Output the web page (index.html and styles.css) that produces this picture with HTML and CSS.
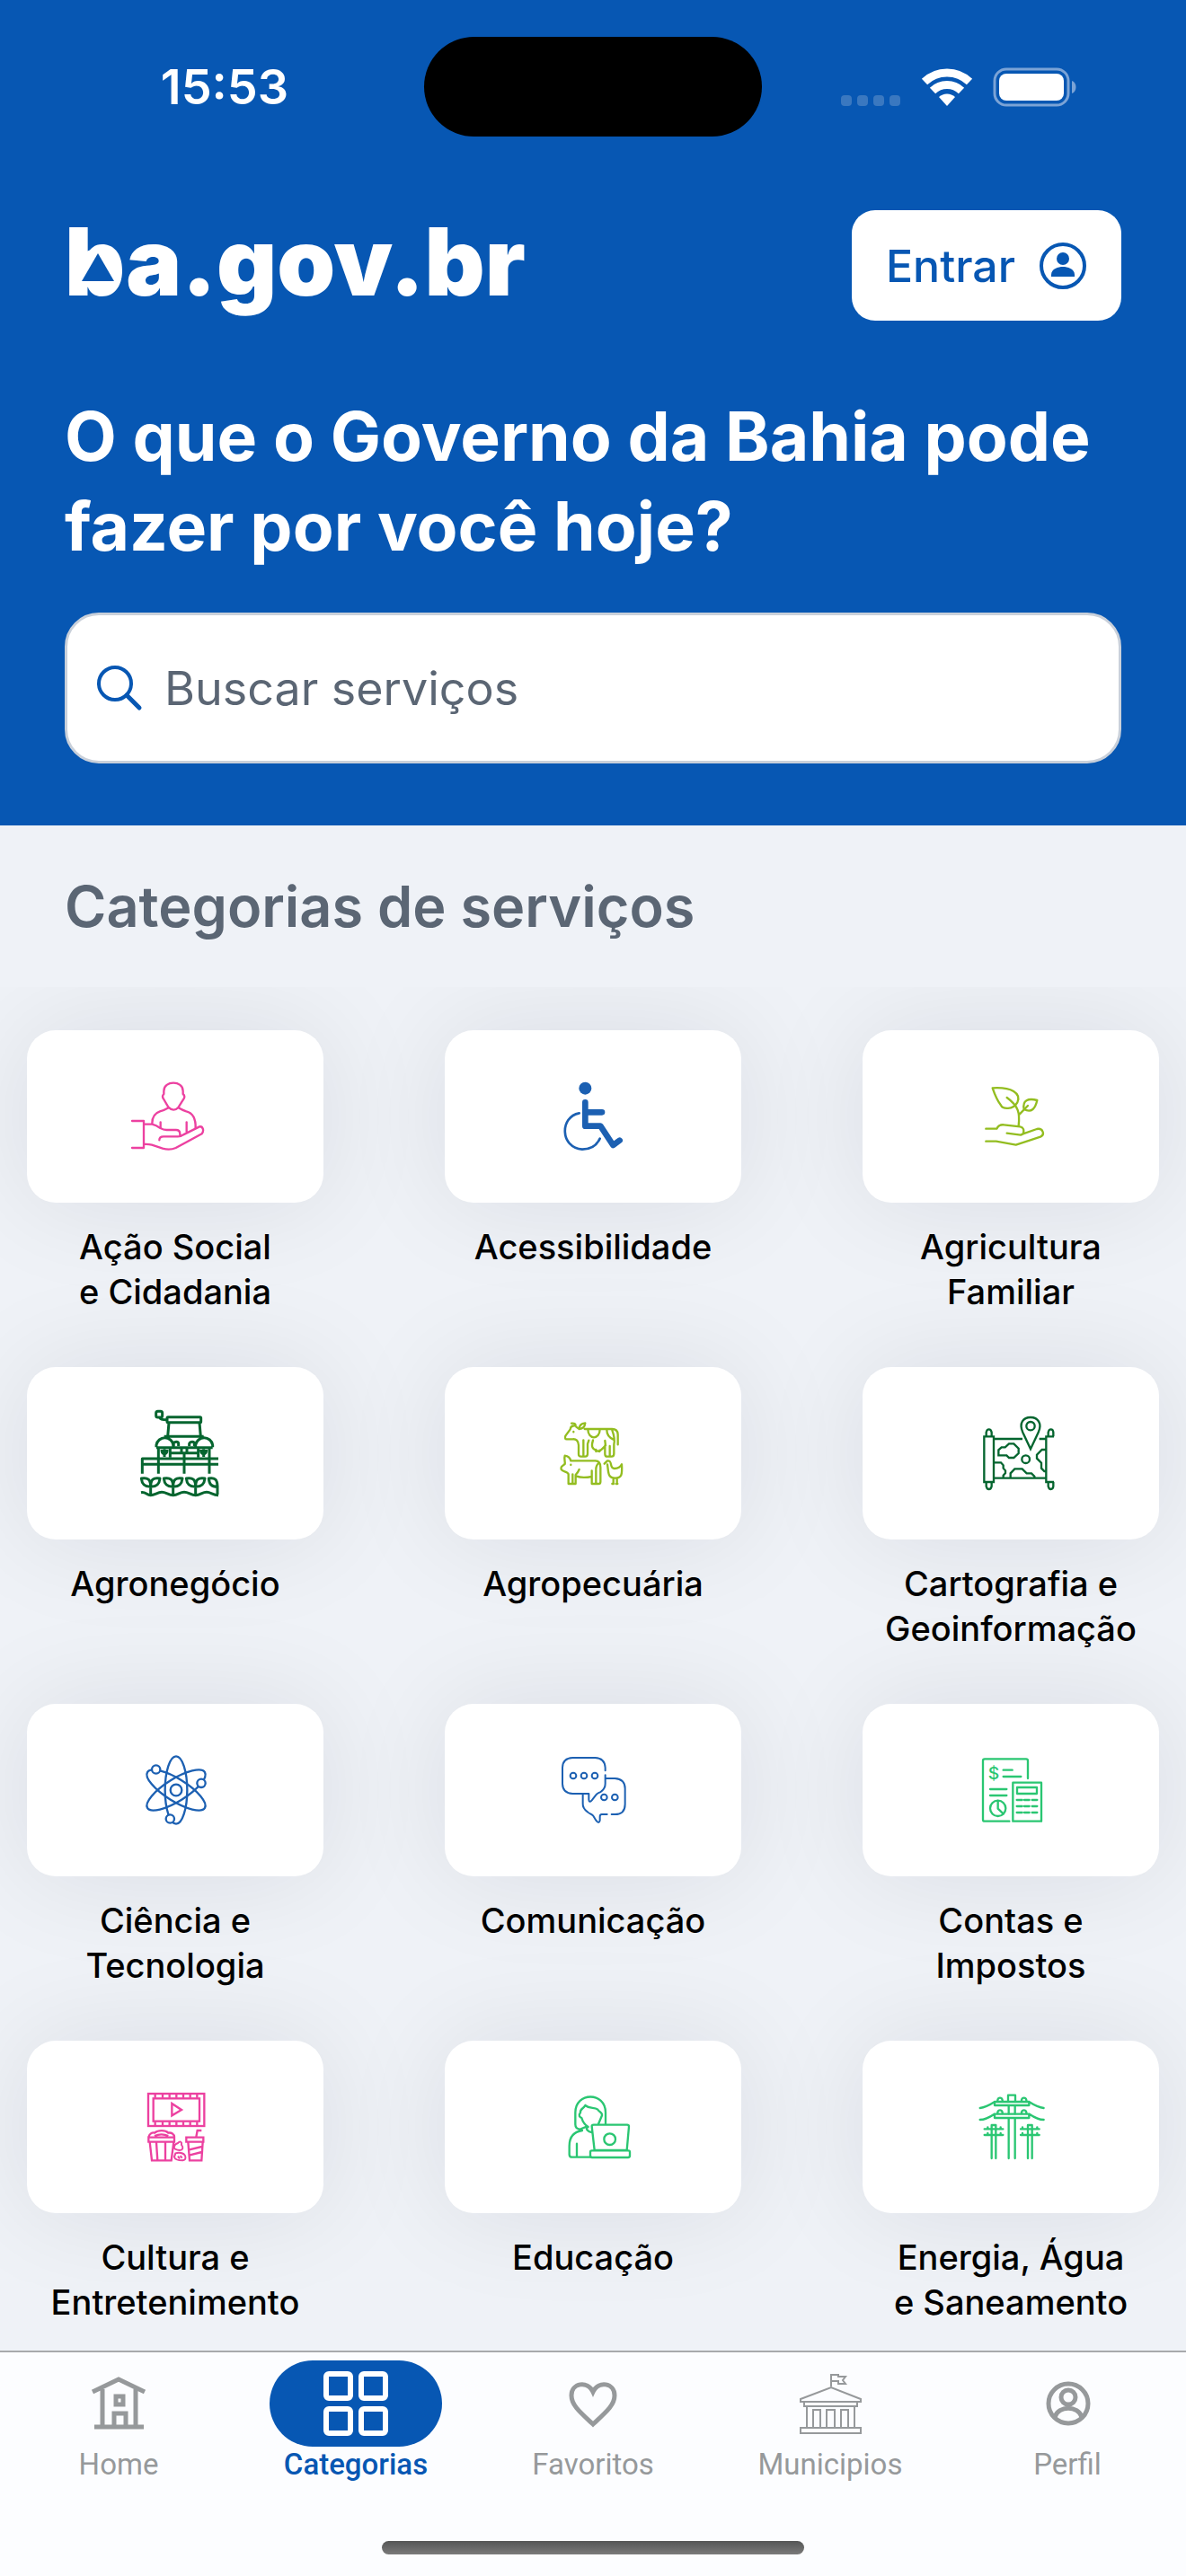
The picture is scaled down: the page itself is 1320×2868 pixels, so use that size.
FILE: index.html
```html
<!DOCTYPE html>
<html lang="pt-BR">
<head>
    <meta charset="UTF-8">
    <meta name="viewport" content="width=device-width, initial-scale=1.0">
    <title>ba.gov.br - Categorias de serviços</title>
    <link rel="stylesheet" href="styles.css">
</head>
<body>
    <header class="header">
        <div class="status-bar">
            <time class="clock">15:53</time>
            <div class="island"></div>
            <div class="status-icons">
                <svg width="67" height="44" viewBox="0 0 67 44" fill="#3a78c0">
                    <rect x="0" y="31" width="12" height="12" rx="4"/>
                    <rect x="18" y="31" width="12" height="12" rx="4"/>
                    <rect x="36" y="31" width="12" height="12" rx="4"/>
                    <rect x="54" y="31" width="12" height="12" rx="4"/>
                </svg>
                <svg width="58" height="44" viewBox="0 0 58 44" fill="none" stroke="#fff" stroke-width="9">
                    <path d="M4 16a36 36 0 0 1 50 0"/>
                    <path d="M13 26a23 23 0 0 1 32 0"/>
                    <path d="M29 43l-9-10a13 13 0 0 1 18 0z" fill="#fff" stroke="none"/>
                </svg>
                <svg width="94" height="44" viewBox="0 0 94 44">
                    <rect x="2" y="2" width="82" height="40" rx="13" fill="none" stroke="#7ba3d6" stroke-width="3"/>
                    <rect x="7" y="7" width="72" height="30" rx="8" fill="#fff"/>
                    <path d="M88 15c6 2 6 12 0 14z" fill="#7ba3d6"/>
                </svg>
            </div>
        </div>

        <div class="brand-row">
            <a href="#" class="logo">ba.gov.br
                <svg class="logo-mark" viewBox="0 0 46 42">
                    <rect x="2" y="0" width="42" height="42" rx="16" fill="#fff"/>
                    <path d="M23 4l18 31H5z" fill="#0757b3"/>
                </svg>
            </a>
            <button type="button" class="login-btn">
                Entrar
                <svg width="54" height="54" viewBox="0 0 54 54">
                    <circle cx="27" cy="27" r="24" fill="none" stroke="#0757b3" stroke-width="4"/>
                    <circle cx="27" cy="19" r="7" fill="#0757b3"/>
                    <path d="M14 39v-2c0-7 8-9 13-9s13 2 13 9v2z" fill="#0757b3"/>
                </svg>
            </button>
        </div>

        <h1>O que o Governo da Bahia pode fazer por você hoje?</h1>

        <label class="search">
            <svg width="52" height="52" viewBox="0 0 52 52" fill="none" stroke="#0757b3" stroke-width="4" stroke-linecap="round">
                <circle cx="21" cy="21" r="18"/>
                <path d="M34 34l14 14" stroke-width="5"/>
            </svg>
            <input type="search" placeholder="Buscar serviços" aria-label="Buscar serviços">
        </label>
    </header>

    <main>
        <h2>Categorias de serviços</h2>
        <div class="categories">
            <a href="#" class="category">
                <span class="card pink">
                    <svg viewBox="120 144 330 330" stroke-width="7">
                        <path d="M141 324h39v90h-39M180 335h28q14 4 26 12 12 7 22 7h32q12 0 13 12v6M232 388q0-12 14-12h48q10 0 18-6l54-27c12-2 16 14 8 24l-87 47q-20 9-44 2l-36-12q-12-3-27-2"/>
                        <path d="M208 332c0-22 8-34 26-40q16-4 29-12M296 280q12 8 26 12c24 6 32 26 31 56M236 328v18M323 328v32"/>
                        <path d="M262 278l-15-26q-8-10 0-18v-10c0-36 64-36 64 0v10q10 8 0 20l-15 24q-16 18-34 0z"/>
                    </svg>
                </span>
                <span class="name">Ação Social<br>e Cidadania</span>
            </a>
            <a href="#" class="category">
                <span class="card blue">
                    <svg viewBox="135 144 330 330" stroke-width="20">
                        <circle cx="274" cy="215" r="21" fill="#1c60b2" stroke="none"/>
                        <path d="M274 262v79h51l42 64 22-16M274 295h56"/>
                        <path d="M254 298c-66 12-64 116 10 121q42 0 59-36" stroke-width="8"/>
                    </svg>
                </span>
                <span class="name">Acessibilidade</span>
            </a>
            <a href="#" class="category">
                <span class="card lime">
                    <svg viewBox="150 144 330 330" stroke-width="7">
                        <path d="M232 350h36c6-12 12-14 24-13l54 6c12 2 14 12 10 24l-8 4-46-6M356 367l46-16c20-4 28 18 12 26l-82 27-66-12h-34"/>
                        <path d="M341 340c5-42 0-66-39-94M344 302l28-29"/>
                        <path d="M254 214c64-4 96 18 83 48-15 26-49 24-56 8-14-18-20-36-27-56zM403 255c-30-8-50 0-44 30 26 14 38-4 44-30z"/>
                    </svg>
                </span>
                <span class="name">Agricultura<br>Familiar</span>
            </a>
            <a href="#" class="category">
                <span class="card dark-green">
                    <svg viewBox="120 129 330 330" stroke-width="9" class="cropped">
                        <rect x="221" y="154" width="21" height="20" rx="6"/>
                        <path d="M234 176q2 6 22 6"/>
                        <rect x="258" y="173" width="113" height="18" rx="3"/>
                        <path d="M264 192l-4 46M366 192l4 46M248 238h132M222 274v-8a29 29 0 0 1 57 0v8M353 274v-8a29 29 0 0 1 57 0v8M222 275h188"/>
                        <path d="M279 270v-8c4-8 17-8 17 0v8M332 270v-8c4-8 17-8 17 0v8"/>
                        <path d="M229 278v84M268 278v30M362 278v30M399 278v84M306 278v14M324 278v14M268 293h94M315 294v68M249 306v-26M240 282q0 14 9 14t9-14M380 306v-26M371 282q0 14 9 14t9-14"/>
                        <path d="M429 312H175v50M177 331h252"/>
                        <path d="M203 432v-30M203 406c-20 0-29-8-31-28 22-4 31 4 31 28 0-24 9-32 31-28-2 20-11 28-31 28M278 432v-30M278 406c-20 0-29-8-31-28 22-4 31 4 31 28 0-24 9-32 31-28-2 20-11 28-31 28M353 432v-30M353 406c-20 0-29-8-31-28 22-4 31 4 31 28 0-24 9-32 31-28-2 20-11 28-31 28M426 432v-30M426 406c-20 0-27-8-29-28 20-4 29 4 29 28"/>
                        <path d="M171 425c16-3 18 9 32 9s22-10 37-10 22 10 38 10 22-10 37-10 22 10 38 10 22-10 37-10 20 10 39 10"/>
                    </svg>
                </span>
                <span class="name">Agronegócio</span>
            </a>
            <a href="#" class="category">
                <span class="card lime">
                    <svg viewBox="1515 129 330 330" stroke-width="7">
                        <path d="M1608 194q14-2 14 8-16-2-18 12l-16 22q-4 12 6 11h18q18-2 20 20v30q0 8 8 8h14q8 0 8-10v-32l4-12M1624 206l10 7q18-2 20-20-20 2-20 20M1652 213h92q18 0 19 18v34M1648 250v54M1663 214c0 36 40 36 40 0M1680 250c-6 20-4 28 10 34q10 8 20-4l12-12-2-16M1720 268v28q0 9 8 9h14q8 0 8-10v-30c4-18 0-32-6-48M1736 270v32M1726 216q0 22 22 32M1690 282v6M1702 284v4M1615 222v1"/>
                        <path d="M1586 302q16 2 20 17h82c12 0 17 10 17 22v48q0 7-7 7h-22v-24q-34 6-52-2M1586 302c-4 12 2 20 0 28-10 8-14 8-12 18 4 8 22 6 24 16v32h24v-30q8-8 12-18M1612 364v30M1690 350v44M1676 372v-20M1700 326q-10 8-10 22M1606 332v1"/>
                        <path d="M1718 329l10-10c20-2 4 26 24 26 12 0 20-6 24-14 2 34 0 46-22 46-26 0-22-20-26-46M1748 378v18M1760 378v18M1744 396h5M1757 396h5"/>
                    </svg>
                </span>
                <span class="name">Agropecuária</span>
            </a>
            <a href="#" class="category">
                <span class="card dark-green">
                    <svg viewBox="150 129 330 330" stroke-width="7" class="square">
                        <path d="M226 238h32v152h-32zM233 238v-14q2-10 9-10t9 10v14M233 390v14q2 10 9 10t9-10v-14M459 238h-26v152h26M440 238v-14q2-10 9-10t8 10v14M440 390v14q2 10 9 10t8-10v-14M258 246h96M410 246h22M258 377h175"/>
                        <path d="M381 280l-26-56c-14-32 2-50 26-50s40 20 26 50z"/>
                        <circle cx="381" cy="203" r="14"/>
                        <circle cx="365" cy="314" r="13"/>
                        <path d="M274 301v-18l10-9h12l13-12h16l16 16v16l-16 15h-16l-8-8zM258 325h24l8 9v10l7 8v8l-7 8v9M314 377v-16l14-15h25l15 15h16l10 10v6M433 282h-14l-17 17v12l15 15v18l10 10h6"/>
                    </svg>
                </span>
                <span class="name">Cartografia e<br>Geoinformação</span>
            </a>
            <a href="#" class="category">
                <span class="card blue">
                    <svg viewBox="120 114 330 330" stroke-width="7">
                        <ellipse cx="288" cy="279" rx="37" ry="113"/>
                        <ellipse cx="288" cy="279" rx="37" ry="113" transform="rotate(58 288 279)"/>
                        <ellipse cx="288" cy="279" rx="37" ry="113" transform="rotate(-58 288 279)"/>
                        <circle cx="288" cy="279" r="19"/>
                        <circle cx="221" cy="210" r="14" fill="#fff"/>
                        <circle cx="372" cy="256" r="14" fill="#fff"/>
                        <circle cx="268" cy="375" r="14" fill="#fff"/>
                    </svg>
                </span>
                <span class="name">Ciência e<br>Tecnologia</span>
            </a>
            <a href="#" class="category">
                <span class="card blue">
                    <svg viewBox="1515 114 330 330" stroke-width="6">
                        <path d="M1721 214v-10q-2-32-34-33h-75q-33 1-34 33v54q1 32 34 33h54v20q1 12 10 2l14-18c6-8 12-6 18-12q13-10 13-26v-28"/>
                        <path d="M1723 240h30q34 2 34 34v52q0 34-34 34h-11M1727 360h-18q-6 0-6 8v12q-3 14-13 0l-10-16c-6-6-12-6-18-12q-17-12-16-28v-32"/>
                        <circle cx="1614" cy="231" r="10"/>
                        <circle cx="1650" cy="231" r="10"/>
                        <circle cx="1686" cy="231" r="10"/>
                        <circle cx="1717" cy="303" r="10"/>
                        <circle cx="1753" cy="303" r="10"/>
                    </svg>
                </span>
                <span class="name">Comunicação</span>
            </a>
            <a href="#" class="category">
                <span class="card green">
                    <svg viewBox="150 114 330 330" stroke-width="7">
                        <path d="M372 240v-59q0-6-6-6H228q-6 0-6 6v196q0 6 6 6h82M290 212h30M290 234h59M246 276h55M246 297h55"/>
                        <text x="258" y="242" class="money">$</text>
                        <circle cx="272" cy="340" r="26"/>
                        <path d="M272 315v26l18 17"/>
                        <rect x="322" y="254" width="95" height="129"/>
                        <rect x="336" y="270" width="66" height="21"/>
                        <path d="M335 312h18M360 312h17M386 312h17M335 333h18M360 333h17M386 333h17M335 354h18M360 354h17M386 354h17"/>
                    </svg>
                </span>
                <span class="name">Contas e<br>Impostos</span>
            </a>
            <a href="#" class="category">
                <span class="card pink">
                    <svg viewBox="120 99 330 330" stroke-width="7" class="square">
                        <rect x="195" y="153" width="187" height="108"/>
                        <rect x="212" y="169" width="154" height="76"/>
                        <path d="M218 153v14M243 153v14M266 153v14M289 153v14M312 153v14M335 153v14M358 153v14M218 247v14M243 247v14M266 247v14M289 247v14M312 247v14M335 247v14M358 247v14"/>
                        <path d="M274 186v40l32-19z"/>
                        <path d="M196 299h86v15h-86zM200 314l7 62h65l8-62M222 316l4 60M252 316v60M196 298c4-14 14-16 20-14 12-10 36-10 46 0 10-2 20 4 20 14M216 294c14-6 32-6 46 0"/>
                        <path d="M322 299h57v15h-57zM328 314l5 62h40l4-62M355 298l4-22h14M332 340l42-10M334 358l40-10"/>
                        <path d="M294 318c8-8 14-4 12 6 8 10 4 18-6 18-10 0-22-6-18-12 0-6 6-10 12-12zM286 352c10-4 28-2 32 8 4 10 0 14-8 16-16 0-26-2-28-12zM294 362l6 8M302 360l6 8" stroke-width="6"/>
                    </svg>
                </span>
                <span class="name">Cultura e<br>Entretenimento</span>
            </a>
            <a href="#" class="category">
                <span class="card green">
                    <svg viewBox="1515 99 330 330" stroke-width="7">
                        <path d="M1722 254v-38c0-70-101-70-101 0v40q0 16 18 16M1654 192c-6 12-18 12-16 24-8 10-2 16 4 18 4 14 12 24 22 30M1654 192c16 14 30 4 42 14 4 8 16 10 14 20l-12 28M1641 270l20-8M1662 264c-8 8 2 16 14 18M1644 276c-28 4-43 22-43 52v28q0 9 10 9h62M1626 320v44"/>
                        <path d="M1676 262q0-5 6-5h112q6 0 6 6l-7 79h-108zM1671 348q0-5 5-5h122q5 0 5 5v12q0 6-6 6h-120q-6 0-6-6z"/>
                        <circle cx="1736" cy="305" r="19"/>
                    </svg>
                </span>
                <span class="name">Educação</span>
            </a>
            <a href="#" class="category">
                <span class="card green">
                    <svg viewBox="150 99 330 330" stroke-width="7">
                        <path d="M306 180v-22h24v22M308 194v26M329 194v26M308 236v133M329 236v133"/>
                        <path d="M261 180h115v12H261zM261 221h115v13H261zM212 201q20-2 48-20M425 201q-20-2-48-20M212 240q20 0 48-19M425 240q-20 0-48-19"/>
                        <path d="M271 178v-4q2-7 8-7t8 7v4M351 178v-4q2-7 8-7t8 7v4M271 219v-4q2-7 8-7t8 7v4M351 219v-4q2-7 8-7t8 7v4"/>
                        <path d="M251 369V258h14v111M227 271h62M227 291h62M238 265v5M281 265v5M238 285v5M281 285v5M372 369V258h14v111M348 271h62M348 291h62M354 265v5M403 265v5M354 285v5M403 285v5"/>
                    </svg>
                </span>
                <span class="name">Energia, Água<br>e Saneamento</span>
            </a>
        </div>
    </main>

    <nav class="tab-bar">
        <div class="tabs">
            <a href="#" class="tab">
                <span class="tab-icon">
                    <svg viewBox="0 0 72 72" stroke-width="5">
                        <path d="M7 23L36 9l29 14M18 20v42M55 20v42M9 62h55M31 62V47h13v15M33 28h8v9h-8z"/>
                    </svg>
                </span>
                Home
            </a>
            <a href="#" class="tab active">
                <span class="tab-icon">
                    <svg viewBox="0 0 72 72" stroke-width="6">
                        <rect x="3" y="3" width="27" height="27" rx="3"/>
                        <rect x="42" y="3" width="27" height="27" rx="3"/>
                        <rect x="3" y="42" width="27" height="27" rx="3"/>
                        <rect x="42" y="42" width="27" height="27" rx="3"/>
                    </svg>
                </span>
                Categorias
            </a>
            <a href="#" class="tab">
                <span class="tab-icon">
                    <svg viewBox="0 0 72 72" stroke-width="5">
                        <path d="M36 59C22 46 12 38 12 27c0-14 18-17 24-4 6-13 24-10 24 4 0 11-10 19-24 32z"/>
                    </svg>
                </span>
                Favoritos
            </a>
            <a href="#" class="tab">
                <span class="tab-icon">
                    <svg viewBox="0 0 72 72" stroke-width="2">
                        <path d="M37 17V3M37 4h8v2h8l-3 4 3 4h-8v-3h-8M3 31l34-13 33 13v3H3zM7 34h59v5H7zM10 39v24M63 39v24M17 63V43h8v20M32 63V43h9v20M48 63V43h8v20M3 63h67v6H3z"/>
                    </svg>
                </span>
                Municipios
            </a>
            <a href="#" class="tab">
                <span class="tab-icon">
                    <svg viewBox="0 0 72 72" stroke-width="5">
                        <circle cx="37" cy="36" r="22"/>
                        <circle cx="37" cy="29" r="8"/>
                        <path d="M22 51c4-13 26-13 30 0"/>
                    </svg>
                </span>
                Perfil
            </a>
        </div>
        <div class="home-indicator"></div>
    </nav>
</body>
</html>
```

FILE: styles.css
```css
* {
    box-sizing: border-box;
}
body {
    margin: 0;
    height: 100vh;
    display: flex;
    flex-direction: column;
    background-color: #eff2f7;
    font-family: Inter, sans-serif;
    color: #000;
}
a {
    color: inherit;
    text-decoration: none;
}

/* header */
.header {
    background-color: #0757b3;
    color: white;
    padding: 41px 72px 69px;
}
.status-bar {
    display: grid;
    grid-template-columns: 1fr 376px 1fr;
    align-items: center;
    margin: 0 -72px 82px;
}
.clock {
    padding-left: 28px;
    text-align: center;
    font-size: 54px;
    font-weight: 600;
}
.island {
    height: 111px;
    border-radius: 56px;
    background-color: black;
}
.status-icons {
    display: flex;
    justify-content: center;
    gap: 22px;
    padding-right: 34px;
}
.brand-row {
    display: flex;
    justify-content: space-between;
    align-items: flex-start;
    height: 123px;
    margin-bottom: 79px;
}
.logo {
    position: relative;
    font-size: 104px;
    font-weight: 900;
    line-height: 114px;
}
.logo-mark {
    position: absolute;
    left: 14px;
    top: 44px;
    width: 46px;
    height: 42px;
}
.login-btn {
    display: flex;
    align-items: center;
    gap: 26px;
    height: 123px;
    padding: 0 38px;
    border: none;
    border-radius: 26px;
    background-color: white;
    color: #0757b3;
    font-family: inherit;
    font-size: 50px;
    font-weight: 500;
}
h1 {
    margin: 0 0 46px;
    font-size: 75px;
    font-weight: 700;
    line-height: 100px;
}
.search {
    display: flex;
    align-items: center;
    gap: 24px;
    height: 168px;
    padding: 0 32px;
    border: 3px solid #c9d0da;
    border-radius: 38px;
    background-color: white;
}
.search input {
    flex: 1;
    min-width: 0;
    padding: 0;
    border: none;
    outline: none;
    background: none;
    font-family: inherit;
    font-size: 52px;
    color: #5b6674;
}
.search input::placeholder {
    color: #5b6674;
    opacity: 1;
}

/* categories */
main {
    flex: 1;
    min-height: 0;
    display: flex;
    flex-direction: column;
}
h2 {
    margin: 0;
    padding: 0 72px;
    font-size: 63px;
    font-weight: 600;
    line-height: 180px;
    color: #5b6674;
}
.categories {
    flex: 1;
    min-height: 0;
    overflow: hidden;
    display: grid;
    grid-template-columns: repeat(3, 1fr);
    align-content: start;
    gap: 59px 135px;
    padding: 48px 30px 0;
}
.category {
    display: flex;
    flex-direction: column;
    gap: 24px;
    min-width: 0;
}
.card {
    display: flex;
    justify-content: center;
    align-items: center;
    height: 192px;
    border-radius: 32px;
    background-color: white;
    box-shadow: 0 0 120px rgba(20, 20, 35, 0.09);
}
.card svg {
    width: 110px;
    height: 110px;
    fill: none;
    stroke: currentColor;
    stroke-linecap: round;
    stroke-linejoin: round;
}
.card svg.square {
    stroke-linecap: butt;
    stroke-linejoin: miter;
}
.card svg.cropped {
    stroke-linecap: butt;
}
.money {
    fill: currentColor;
    stroke: none;
    font-size: 58px;
    font-weight: 500;
    text-anchor: middle;
}
.pink { color: #ec41a0; }
.blue { color: #1c60b2; }
.lime { color: #93bd20; }
.green { color: #2ac672; }
.dark-green { color: #05652f; }
.name {
    position: relative;
    min-height: 100px;
    text-align: center;
    font-size: 38px;
    font-weight: 500;
    line-height: 50px;
    white-space: nowrap;
}

/* bottom tabs */
.tab-bar {
    position: relative;
    border-top: 2px solid #a8aaad;
    background-color: #fcfdff;
    padding: 9px 0 24px;
}
.tabs {
    display: grid;
    grid-template-columns: repeat(5, 1fr);
    margin-bottom: 65px;
}
.tab {
    display: flex;
    flex-direction: column;
    align-items: center;
    font-family: Roboto, sans-serif;
    font-size: 33px;
    font-weight: 400;
    line-height: 40px;
    color: #96999b;
}
.tab-icon {
    display: flex;
    justify-content: center;
    align-items: center;
    width: 192px;
    height: 96px;
    border-radius: 48px;
}
.tab-icon svg {
    width: 72px;
    height: 72px;
    fill: none;
    stroke: currentColor;
}
.tab.active {
    color: #0757b3;
    font-weight: 500;
}
.tab.active .tab-icon {
    background-color: #0757b3;
    color: white;
}
.home-indicator {
    width: 470px;
    height: 15px;
    margin: 0 auto;
    border-radius: 8px;
    background: linear-gradient(#555656, #7a7a7a);
}
```
